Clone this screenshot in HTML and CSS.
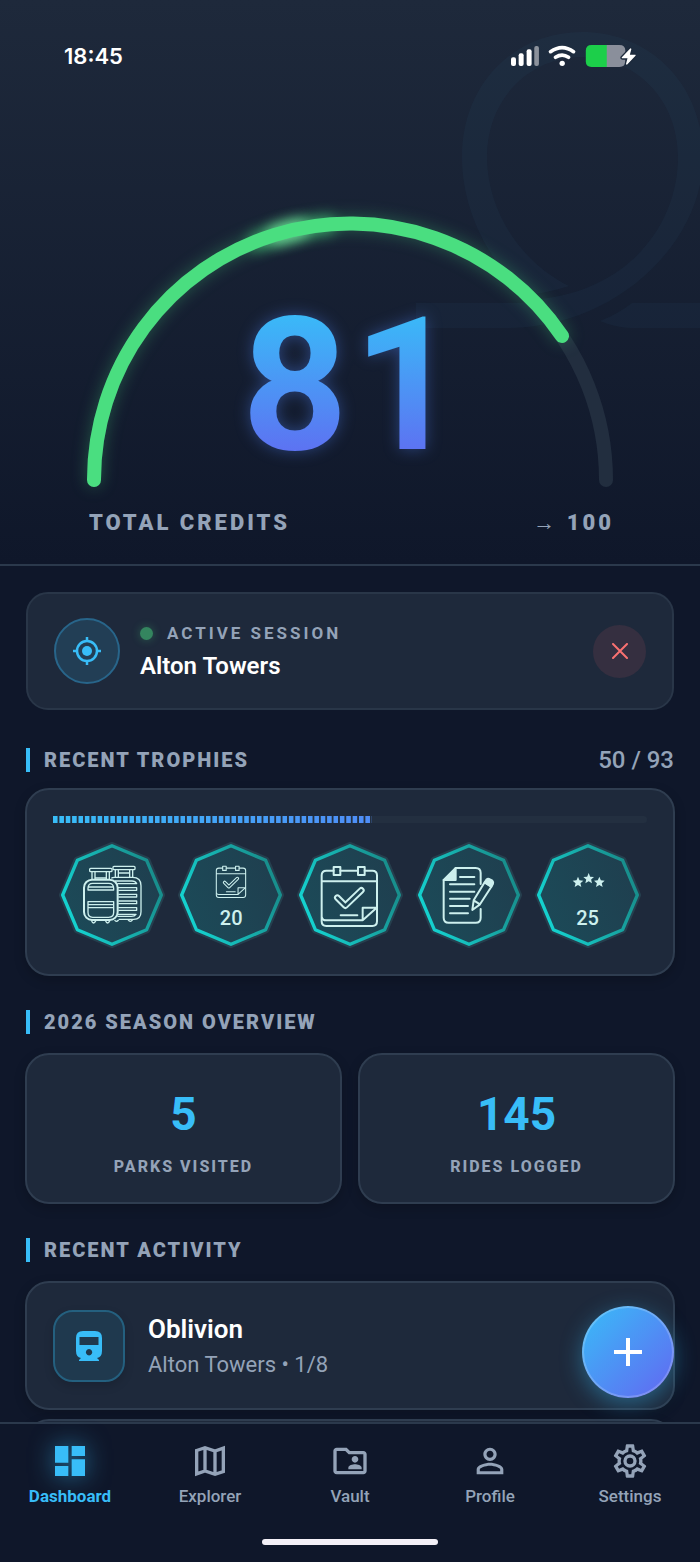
FILE: index.html
```html
<!DOCTYPE html>
<html lang="en">
<head>
  <meta charset="UTF-8">
  <title>Dashboard</title>
  <meta name="viewport" content="width=device-width, initial-scale=1.0">
  <link rel="stylesheet" href="styles.css">
</head>
<body>

<!-- shared shapes -->
<svg class="defs" aria-hidden="true">
  <defs>
    <linearGradient id="teal" x1="0" y1="0.7" x2="1" y2="0.3">
      <stop offset="0" stop-color="#14d6d3"/>
      <stop offset="1" stop-color="#188a88"/>
    </linearGradient>
    <linearGradient id="tealFill" x1="0" y1="0.7" x2="1" y2="0.3">
      <stop offset="0" stop-color="#1c4a58"/>
      <stop offset="1" stop-color="#1f3f4f"/>
    </linearGradient>
    <symbol id="badge" viewBox="-159 -159 318 318">
      <path d="M0-149 105-105 149 0 105 105 0 149-105 105-149 0-105-105z" fill="none" stroke="#263f4e" stroke-width="20" stroke-linejoin="round"/>
      <path d="M0-148 104-104 148 0 104 104 0 148-104 104-148 0-104-104z" fill="url(#tealFill)" stroke="url(#teal)" stroke-width="10" stroke-linejoin="round"/>
    </symbol>
    <g id="calendar" fill="none" stroke="#cdf0ee" stroke-width="6" stroke-linejoin="round" stroke-linecap="round">
      <path d="M-49-73h-22q-14 0-14 14V79q0 14 14 14H67q14 0 14-14V-59q0-14-14-14H44M24-73H-29M-85-41H81"/>
      <path d="M-38-60h-11v-24h20v24zM35-60H24v-24h20v24z"/>
      <path d="M-84 68q2 8 12 8H38L80 38H38v38M-28 61H22"/>
      <path d="M-38 8-14 32 34-14" stroke-width="20"/>
      <path d="M-38 8-14 32 34-14" stroke="#1d4453" stroke-width="8"/>
    </g>
  </defs>
</svg>

<div class="app">
  <main class="screen">

    <header class="hero">
      <svg class="track" viewBox="416 20 284 320" aria-hidden="true">
        <path d="M569 286C520 262 487 210 487 157 487 98 530 57 582 57S678 98 678 157C678 225 628 290 540 299L520 303H416V328H510C620 326 703 240 703 157 703 84 650 32 582 32S462 84 462 157C462 212 490 262 525 295Q548 293 569 286zM632 303H700V328H630Q614 327 600 321 618 314 632 303z"/>
      </svg>

      <div class="status">
        <span class="clock">18:45</span>
        <svg class="status-icons" viewBox="333 135 376 66" aria-hidden="true">
          <g fill="#fff">
            <rect x="333" y="172" width="15" height="26" rx="6"/>
            <rect x="356" y="160" width="15" height="38" rx="6"/>
            <rect x="380" y="148" width="15" height="50" rx="6"/>
            <rect x="403" y="138" width="14" height="60" rx="6" fill="#8c929c"/>
            <circle cx="487" cy="190" r="8"/>
          </g>
          <path d="M452 155q35-25 69 0M467 172q20-13 39 0" fill="none" stroke="#fff" stroke-width="11" stroke-linecap="round"/>
          <path d="M575 135h47v66h-47q-17 0-17-17v-32q0-17 17-17z" fill="#1ccf4a"/>
          <path d="M621 135h38q18 0 18 17v32q0 17-18 17h-38z" fill="#8a8f9b"/>
          <path d="M693 147 668 173h18l-5 19 25-26H688z" fill="#fff" stroke="#1d2a3b" stroke-width="12" stroke-linejoin="round"/>
          <path d="M693 147 668 173h18l-5 19 25-26H688z" fill="#fff" stroke="#fff" stroke-width="4" stroke-linejoin="round"/>
        </svg>
      </div>

      <div class="gauge">
        <svg class="gauge-arc" viewBox="0 0 526 270" aria-hidden="true">
          <path class="arc-base" d="M7 263A256 256 0 0 1 519 263"/>
          <path class="arc-shine wide" d="M170 25A256 256 0 0 1 240 8"/>
          <path class="arc-shine" d="M190 18A256 256 0 0 1 212 12"/>
          <path class="arc-value" d="M7 263A256 256 0 0 1 475 119"/>
        </svg>
        <strong class="gauge-number">81</strong>
      </div>

      <div class="gauge-labels">
        <span>TOTAL CREDITS</span>
        <span>→ 100</span>
      </div>
    </header>

    <div class="content">

      <section class="session">
        <span class="session-icon">
          <svg viewBox="0 0 28 28" aria-hidden="true">
            <circle cx="14" cy="14" r="10" fill="none" stroke="currentColor" stroke-width="2.5"/>
            <circle cx="14" cy="14" r="5"/>
            <path d="M14 0v4M14 24v4M0 14h4M24 14h4" stroke="currentColor" stroke-width="2.5"/>
          </svg>
        </span>
        <div class="session-text">
          <p class="session-label"><i class="dot"></i>ACTIVE SESSION</p>
          <p class="session-name">Alton Towers</p>
        </div>
        <button class="close" aria-label="End session">
          <svg viewBox="0 0 16 16" aria-hidden="true"><path d="M1 1 15 15M15 1 1 15"/></svg>
        </button>
      </section>

      <section class="trophies">
        <div class="heading">
          <h2>RECENT TROPHIES</h2>
          <span class="count">50 / 93</span>
        </div>
        <div class="card trophy-card">
          <div class="progress"><div class="progress-fill" style="width: 53.76%"></div></div>
          <ul class="badges">
            <li>
              <svg viewBox="-159 -159 318 318" role="img" aria-label="Suitcases">
                <use href="#badge" x="-159" y="-159" width="318" height="318"/>
                <g fill="none" stroke="#cdf0ee" stroke-width="4" stroke-linejoin="round">
                  <rect x="3" y="-86" width="66" height="10" rx="3"/>
                  <path d="M10-76v22M19-76v24M53-76v24M62-76v24M19-66H53"/>
                  <path d="M-2-50Q0-53 8-53H62Q87-53 87-28V50Q87 72 65 73H20"/>
                  <path d="M8-42H60Q70-42 74-34H16M18-22H74V-14H19M19-2H74V6H19M19 18H74V26H19M19 38H74V46H19M17 58H72Q68 64 58 64H16"/>
                  <path d="M8 75q4 8 12 0M48 74q7 10 14 0"/>
                  <rect x="-67" y="-80" width="67" height="10" rx="3"/>
                  <path d="M-60-70v22M-51-70v22M-17-70v22M-8-70v22M-51-51H-17"/>
                  <rect x="-84" y="-46" width="101" height="121" rx="24" stroke-width="6"/>
                  <path d="M-72-15V-20Q-72-35-58-35H-10Q5-35 5-20V-15zM-72-24H4"/>
                  <path d="M-72 20H5V52Q5 67-10 67H-58Q-72 67-72 52zM-72 29H5M-72 38H5"/>
                  <path d="M-62 76q6 16 14 0M-20 76q6 16 14 0"/>
                </g>
              </svg>
            </li>
            <li>
              <svg viewBox="-159 -159 318 318" role="img" aria-label="20 days">
                <use href="#badge" x="-159" y="-159" width="318" height="318"/>
                <use href="#calendar" transform="translate(1 -42) scale(.53)"/>
              </svg>
              <b>20</b>
            </li>
            <li>
              <svg viewBox="-159 -159 318 318" role="img" aria-label="Calendar">
                <use href="#badge" x="-159" y="-159" width="318" height="318"/>
                <use href="#calendar"/>
              </svg>
            </li>
            <li>
              <svg viewBox="-159 -159 318 318" role="img" aria-label="Notes">
                <use href="#badge" x="-159" y="-159" width="318" height="318"/>
                <g fill="none" stroke="#cdf0ee" stroke-width="6" stroke-linecap="round" stroke-linejoin="round">
                  <path d="M-40-81H20Q35-81 35-66V-33M35 42V68Q35 83 20 83H-61Q-76 83-76 68V-45"/>
                  <path d="M-76-45-40-81V-45z" fill="#cdf0ee"/>
                  <path d="M-27-54H16M-57-32H16M-57-10H16M-57 11H2M-57 33H-3M-57 55H-3"/>
                  <path d="M14 16 47-38 67-25 33 28 10 45zM14 16 33 28"/>
                  <path d="M47-38 53-47Q57-51 63-47L70-43Q74-39 72-34L67-25z" fill="#cdf0ee"/>
                </g>
              </svg>
            </li>
            <li>
              <svg viewBox="-159 -159 318 318" role="img" aria-label="25 stars">
                <use href="#badge" x="-159" y="-159" width="318" height="318"/>
                <g fill="#cdf0ee">
                  <path id="star" d="M-30-55-25.500-44-14-43-22.700-35.500-20-24-30-30-40-24-37.300-35.500-46-43-34.500-44z"/>
                  <use href="#star" x="32" y="-11"/>
                  <use href="#star" x="64"/>
                </g>
              </svg>
              <b>25</b>
            </li>
          </ul>
        </div>
      </section>

      <section>
        <div class="heading"><h2>2026 SEASON OVERVIEW</h2></div>
        <div class="stats">
          <div class="card stat">
            <strong>5</strong>
            <span>PARKS VISITED</span>
          </div>
          <div class="card stat">
            <strong>145</strong>
            <span>RIDES LOGGED</span>
          </div>
        </div>
      </section>

      <section>
        <div class="heading"><h2>RECENT ACTIVITY</h2></div>
        <ul class="activity">
          <li class="card ride">
            <span class="ride-icon">
              <svg viewBox="0 0 26 30" aria-hidden="true">
                <path fill-rule="evenodd" d="M7 0H19Q26 0 26 7V20Q26 26 21 27L23 29V30H3V29L5 27Q0 26 0 20V7Q0 0 7 0zM3.500 6V14H22.500V6zM13 18a3.200 3.200 0 1 0 .1 0z"/>
              </svg>
            </span>
            <div>
              <p class="ride-name">Oblivion</p>
              <p class="ride-place">Alton Towers • 1/8</p>
            </div>
          </li>
          <li class="card ride"></li>
        </ul>
      </section>

    </div>
  </main>

  <button class="fab" aria-label="Add ride">
    <svg viewBox="0 0 28 28" aria-hidden="true"><path d="M14 0v28M0 14h28"/></svg>
  </button>

  <nav class="tabs">
    <div class="tab-list">
      <a class="tab active" href="#dashboard">
        <svg viewBox="0 0 24 24" aria-hidden="true"><path d="M3 13h8V3H3v10zm0 8h8v-6H3v6zm10 0h8V11h-8v10zm0-18v6h8V3h-8z"/></svg>
        Dashboard
      </a>
      <a class="tab" href="#explorer">
        <svg viewBox="0 0 24 24" aria-hidden="true"><path d="M4 5.700 9 4l6 2 5-1.700v14L15 20l-6-2-5 1.700zM9 4v14M15 6v14" fill="none" stroke="currentColor" stroke-width="2"/></svg>
        Explorer
      </a>
      <a class="tab" href="#vault">
        <svg viewBox="0 0 24 24" aria-hidden="true"><path d="M20 6h-8l-2-2H4c-1.100 0-1.990.9-1.990 2L2 18c0 1.100.9 2 2 2h16c1.100 0 2-.9 2-2V8c0-1.100-.9-2-2-2zm0 12H4V6h5.170l2 2H20v10zm-5-5c1.100 0 2-.9 2-2s-.9-2-2-2-2 .9-2 2 .9 2 2 2zm-4 4h8v-1c0-1.330-2.670-2-4-2s-4 .67-4 2v1z"/></svg>
        Vault
      </a>
      <a class="tab" href="#profile">
        <svg viewBox="0 0 24 24" aria-hidden="true"><path d="M12 5.900c1.160 0 2.100.94 2.100 2.100s-.94 2.100-2.100 2.100S9.900 9.160 9.900 8s.94-2.100 2.100-2.100m0 9c2.970 0 6.100 1.460 6.100 2.100v1.100H5.900V17c0-.64 3.130-2.100 6.100-2.100M12 4C9.790 4 8 5.790 8 8s1.790 4 4 4 4-1.790 4-4-1.790-4-4-4zm0 9c-2.670 0-8 1.340-8 4v3h16v-3c0-2.660-5.330-4-8-4z"/></svg>
        Profile
      </a>
      <a class="tab" href="#settings">
        <svg viewBox="0 0 24 24" aria-hidden="true"><path d="M12,8A4,4 0 0,1 16,12A4,4 0 0,1 12,16A4,4 0 0,1 8,12A4,4 0 0,1 12,8M12,10A2,2 0 0,0 10,12A2,2 0 0,0 12,14A2,2 0 0,0 14,12A2,2 0 0,0 12,10M10,22C9.75,22 9.54,21.82 9.5,21.58L9.13,18.93C8.5,18.68 7.96,18.34 7.44,17.94L4.95,18.95C4.73,19.03 4.46,18.95 4.34,18.73L2.34,15.27C2.21,15.05 2.27,14.78 2.46,14.63L4.57,12.97L4.5,12L4.57,11L2.46,9.37C2.27,9.22 2.21,8.95 2.34,8.73L4.34,5.27C4.46,5.05 4.73,4.96 4.95,5.05L7.44,6.05C7.96,5.66 8.5,5.32 9.13,5.07L9.5,2.42C9.54,2.18 9.75,2 10,2H14C14.25,2 14.46,2.18 14.5,2.42L14.87,5.07C15.5,5.32 16.04,5.66 16.56,6.05L19.05,5.05C19.27,4.96 19.54,5.05 19.66,5.27L21.66,8.73C21.79,8.95 21.73,9.22 21.54,9.37L19.43,11L19.5,12L19.43,13L21.54,14.63C21.73,14.78 21.79,15.05 21.66,15.27L19.66,18.73C19.54,18.95 19.27,19.04 19.05,18.95L16.56,17.95C16.04,18.34 15.5,18.68 14.87,18.93L14.5,21.58C14.46,21.82 14.25,22 14,22H10M11.25,4L10.88,6.61C9.68,6.86 8.62,7.5 7.85,8.39L5.44,7.35L4.69,8.65L6.8,10.2C6.4,11.37 6.4,12.64 6.8,13.8L4.68,15.36L5.43,16.66L7.86,15.62C8.63,16.5 9.68,17.14 10.87,17.38L11.24,20H12.76L13.13,17.39C14.32,17.14 15.37,16.5 16.14,15.62L18.57,16.66L19.32,15.36L17.2,13.81C17.6,12.64 17.6,11.37 17.2,10.2L19.31,8.65L18.56,7.35L16.15,8.39C15.38,7.5 14.32,6.86 13.12,6.62L12.75,4H11.25Z"/></svg>
        Settings
      </a>
    </div>
    <div class="home-bar"></div>
  </nav>
</div>

</body>
</html>
```
FILE: styles.css
```css
* {
  box-sizing: border-box;
}

body {
  margin: 0;
  font-family: Roboto, "Liberation Sans", sans-serif;
  background: #0f172a;
  color: #94a3b8;
}

h2, p, ul {
  margin: 0;
  padding: 0;
}

ul {
  list-style: none;
}

button {
  padding: 0;
  cursor: pointer;
}

svg {
  display: block;
  fill: currentColor;
}

.defs {
  position: absolute;
  width: 0;
  height: 0;
}

.app {
  position: relative;
  display: flex;
  flex-direction: column;
  height: 100vh;
  overflow: hidden;
}

.screen {
  flex: 1;
  min-height: 0;
  overflow-y: auto;
  scrollbar-width: none;
}

/* Header */
.hero {
  position: relative;
  padding: 42px 64px 27px;
  background: linear-gradient(to bottom, #1e293b, #0f172a);
  border-bottom: 2px solid #2b394c;
}

.track {
  position: absolute;
  top: 20px;
  right: 0;
  width: 284px;
  fill: rgba(70, 170, 220, 0.04);
}

.status {
  position: relative;
  display: flex;
  justify-content: space-between;
  align-items: center;
  height: 28px;
}

.clock {
  font-family: Inter, sans-serif;
  font-size: 22px;
  font-weight: 600;
  color: #fff;
}

.status-icons {
  width: 125px;
  height: 22px;
}

.gauge {
  position: relative;
  display: grid;
  justify-items: center;
  align-items: center;
  margin: 147px 23px 0;
}

.gauge-arc,
.gauge-number {
  grid-area: 1 / 1;
}

.gauge-arc {
  width: 100%;
  overflow: visible;
  fill: none;
  stroke-width: 14;
  stroke-linecap: round;
}

.arc-base {
  stroke: #222e3f;
}

.arc-value {
  stroke: #4ade80;
  filter: drop-shadow(0 0 8px rgba(74, 222, 128, 0.3));
}

.arc-shine {
  stroke: #86efac;
  stroke-width: 18;
  opacity: 0.8;
  filter: blur(7px);
}

.arc-shine.wide {
  stroke: #4ade80;
  opacity: 0.6;
}

.gauge-number {
  margin-top: 68px;
  padding-left: 6px;
  font-size: 185px;
  line-height: 186px;
  font-weight: 700;
  letter-spacing: 5px;
  background: linear-gradient(to bottom, #38bdf8 8%, #6366f1 98%);
  -webkit-background-clip: text;
  background-clip: text;
  color: transparent;
  filter: drop-shadow(0 0 8px rgba(79, 130, 246, 0.4));
}

.gauge-labels {
  display: flex;
  justify-content: space-between;
  margin: 22px 22px 0 25px;
  font-size: 22px;
  line-height: 28px;
  font-weight: 900;
  letter-spacing: 3px;
}

/* Content */
.content {
  padding: 26px 25px;
}

.card {
  background: #1e293b;
  border: 2px solid #2f3d50;
  border-radius: 24px;
  box-shadow: 0 4px 12px rgba(0, 0, 0, 0.2);
}

.session {
  display: flex;
  align-items: center;
  gap: 20px;
  margin: 0 1px;
  padding: 24px 26px;
  background: #1e293b;
  border: 2px solid #293648;
  border-radius: 22px;
}

.session-icon {
  display: grid;
  place-items: center;
  width: 66px;
  height: 66px;
  border: 2px solid #28658a;
  border-radius: 50%;
  background: #223e55;
  color: #38bdf8;
}

.session-icon svg {
  width: 28px;
}

.session-text {
  flex: 1;
}

.session-label {
  display: flex;
  align-items: center;
  gap: 14px;
  font-size: 17px;
  line-height: 24px;
  font-weight: 700;
  letter-spacing: 3px;
}

.dot {
  width: 13px;
  height: 13px;
  border-radius: 50%;
  background: #34855f;
  box-shadow: 0 0 10px rgba(74, 222, 128, 0.3);
}

.session-name {
  margin-top: 6px;
  font-size: 24px;
  line-height: 30px;
  font-weight: 600;
  color: #fff;
}

.close {
  display: grid;
  place-items: center;
  width: 53px;
  height: 53px;
  border: none;
  border-radius: 50%;
  background: #352f40;
}

.close svg {
  width: 16px;
  stroke: #f87171;
  stroke-width: 2;
  stroke-linecap: round;
}

section + section {
  margin-top: 34px;
}

.session + .trophies {
  margin-top: 38px;
}

.heading {
  display: flex;
  justify-content: space-between;
  align-items: center;
  height: 24px;
  margin: 0 1px 19px;
}

.trophies .heading {
  margin-bottom: 16px;
}

.heading h2 {
  padding-left: 14px;
  border-left: 4px solid #38bdf8;
  font-size: 20px;
  line-height: 24px;
  font-weight: 900;
  letter-spacing: 2px;
}

.count {
  font-size: 24px;
  font-weight: 500;
}

/* Trophies */
.trophy-card {
  padding: 26px;
}

.progress {
  height: 7px;
  border-radius: 4px;
  background: #232f40;
}

.progress-fill {
  height: 100%;
  background: linear-gradient(to right, #38bdf8, #4f8df7);
  -webkit-mask: linear-gradient(to right, #000 78%, transparent 78%) 0 0 / 2% 100%;
  mask: linear-gradient(to right, #000 78%, transparent 78%) 0 0 / 2% 100%;
}

.badges {
  display: grid;
  grid-template-columns: repeat(5, 1fr);
  margin-top: 19px;
}

.badges li {
  display: grid;
  justify-items: center;
  align-items: end;
}

.badges svg,
.badges b {
  grid-area: 1 / 1;
}

.badges svg {
  width: 106px;
}

.badges b {
  position: relative;
  margin-bottom: 18px;
  font-size: 20px;
  line-height: 24px;
  font-weight: 500;
  color: #cdf0ee;
}

/* Season overview */
.stats {
  display: grid;
  grid-template-columns: 1fr 1fr;
  gap: 16px;
}

.stat {
  display: flex;
  flex-direction: column;
  align-items: center;
  padding: 33px 16px 25px;
}

.stat strong {
  font-size: 46px;
  line-height: 52px;
  font-weight: 700;
  color: #38bdf8;
}

.stat span {
  margin-top: 17px;
  font-size: 16px;
  line-height: 20px;
  font-weight: 800;
  letter-spacing: 2px;
}

/* Recent activity */
.activity {
  display: grid;
  gap: 9px;
}

.ride {
  display: flex;
  align-items: center;
  gap: 23px;
  min-height: 129px;
  padding: 0 26px;
}

.ride-icon {
  display: grid;
  place-items: center;
  width: 72px;
  height: 72px;
  border: 2px solid #24607f;
  border-radius: 20px;
  background: #1f394e;
  box-shadow: 0 4px 10px rgba(0, 0, 0, 0.15);
  color: #38bdf8;
}

.ride-icon svg {
  width: 26px;
}

.ride-name {
  font-size: 26px;
  line-height: 32px;
  font-weight: 600;
  color: #fff;
}

.ride-place {
  margin-top: 6px;
  font-size: 22px;
  line-height: 28px;
}

/* Floating button */
.fab {
  position: absolute;
  right: 26px;
  bottom: 164px;
  display: grid;
  place-items: center;
  width: 92px;
  height: 92px;
  border: 2px solid rgba(255, 255, 255, 0.2);
  border-radius: 50%;
  background: linear-gradient(135deg, #38bdf8, #6366f1) border-box;
  box-shadow: 0 6px 22px rgba(56, 189, 248, 0.4);
}

.fab svg {
  width: 28px;
  stroke: #fff;
  stroke-width: 4;
}

/* Bottom navigation */
.tabs {
  position: relative;
  padding: 17px 0;
  background: #0f172a;
  border-top: 2px solid #2b394c;
}

.tab-list {
  display: grid;
  grid-template-columns: repeat(5, 1fr);
}

.tab {
  display: flex;
  flex-direction: column;
  align-items: center;
  gap: 5px;
  font-size: 17px;
  line-height: 20px;
  font-weight: 500;
  color: #94a3b8;
  text-decoration: none;
}

.tab svg {
  width: 40px;
  height: 40px;
}

.tab.active {
  color: #38bdf8;
  font-weight: 700;
}

.tab.active svg {
  filter: drop-shadow(0 0 12px rgba(56, 189, 248, 0.6));
}

.home-bar {
  width: 176px;
  height: 6px;
  margin: 33px auto 0;
  border-radius: 3px;
  background: #f3f0f7;
}
```
